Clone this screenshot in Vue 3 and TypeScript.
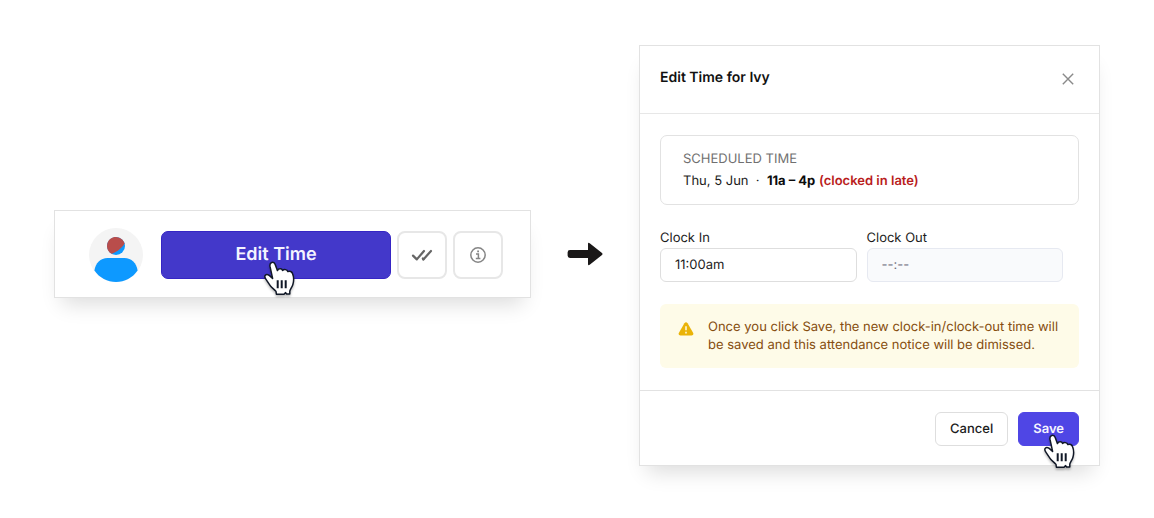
<script setup lang="ts">
import { ref } from 'vue'

const clockIn = ref<string>('11:00am')
const clockOut = ref<string>('')
const handPath =
  'M9.6 17.4 L7 5.4 C6.2 1.2 10.8 -0.2 12.2 3.4 L14.4 9.6 C15.4 7.4 18.8 7.2 19.6 9.4 C21 7.9 24.2 8.4 24.8 10.6 C26.6 9.6 29 10.6 29.6 12.8 C31 16.4 30.8 20.6 29.8 23.8 C29 26.4 27 28.4 26.8 30.2 L26.8 33 L23.6 33 L22.6 31.6 L21 33.2 L13.4 33.2 L13 30.4 C11.4 28.4 8.6 26.8 7.2 24.6 L3 18.4 C0.2 14.6 3 12.4 6.2 14.4 Z'
</script>

<template>
  <main class="page">
    <section class="notice" aria-label="Attendance notice">
      <svg class="avatar" viewBox="0 0 54 54" aria-hidden="true">
        <circle cx="27" cy="27" r="27" fill="#f4f4f4" />
        <circle cx="27" cy="18" r="9" fill="#0d99ff" />
        <path d="M35.6 15.4 A9 9 0 1 0 22.4 25.7 C25.5 25 32 21.5 35.6 15.4 Z" fill="#b94d4b" />
        <path d="M18.5 30 H35.5 C42.5 30 47.5 35 48.6 42.6 C43.6 50 35.6 54 27 54 S10.4 50 5.4 42.6 C6.5 35 11.5 30 18.5 30 Z" fill="#0d99ff" />
      </svg>
      <div class="edit-wrap">
        <button type="button" class="edit">Edit Time</button>
        <svg class="hand" viewBox="0 0 32 35" aria-hidden="true">
          <path :d="handPath" />
          <path class="creases" d="M14.7 19.2V27.2M18.7 19.2V27.2M22.7 19.2V27.2" />
        </svg>
      </div>
      <button type="button" class="tool" aria-label="Approve">
        <svg viewBox="0 0 22 14" width="22" height="14" fill="none" stroke="#666" stroke-width="2.2" stroke-linecap="round" stroke-linejoin="round" aria-hidden="true">
          <path d="M2 7.6 L5.8 11.4 L13 3" />
          <path d="M12.4 11.4 L20 3" />
          <path d="M11.8 10.4 L12.4 11.4" />
        </svg>
      </button>
      <button type="button" class="tool" aria-label="Details">
        <svg viewBox="0 0 18 18" width="18" height="18" fill="none" stroke="#858585" stroke-width="1.5" aria-hidden="true">
          <circle cx="9" cy="9" r="7.2" />
          <path d="M7 8H9.4V12.6M6.8 12.6H11.4" />
          <path d="M8.2 5.3H10" stroke-width="1.8" />
        </svg>
      </button>
    </section>

    <svg class="arrow" viewBox="0 0 36 24" aria-hidden="true">
      <path d="M3 8 H21 V2 Q21 0 23 1.4 L35 11 Q36 12 35 13 L23 22.6 Q21 24 21 22 V16 H3 Q0.6 16 0.6 13.6 V10.4 Q0.6 8 3 8 Z" fill="#1a1818" />
    </svg>

    <section class="dialog" role="dialog" aria-labelledby="dialog-title">
      <header class="head">
        <h1 id="dialog-title">Edit Time for Ivy</h1>
        <button type="button" class="close" aria-label="Close">
          <svg viewBox="0 0 12 12" width="12" height="12" fill="none" stroke="#8a8a8a" stroke-width="1.4" aria-hidden="true">
            <path d="M0.8 0.8 L11.2 11.2 M11.2 0.8 L0.8 11.2" />
          </svg>
        </button>
      </header>

      <form class="body" @submit.prevent>
        <div class="schedule">
          <div class="caption">SCHEDULED TIME</div>
          <div>Thu, 5 Jun &nbsp;·&nbsp; <strong>11a – 4p</strong> <span class="late">(clocked in late)</span></div>
        </div>
        <div class="fields">
          <div class="field">
            <label for="clock-in">Clock In</label>
            <input id="clock-in" v-model="clockIn" type="text" />
          </div>
          <div class="field">
            <label for="clock-out">Clock Out</label>
            <input id="clock-out" v-model="clockOut" type="text" placeholder="--:--" disabled />
          </div>
        </div>
        <div class="warning" role="note">
          <svg viewBox="0 0 16 14" width="16" height="14" aria-hidden="true">
            <path d="M6.4 1.2 Q8 -0.8 9.6 1.2 L15.2 11 Q16 13.2 13.6 13.6 H2.4 Q0 13.2 0.8 11 Z" fill="#eab308" />
            <path d="M8 4.2V8.2M8 9.8V11.4" stroke="#fefce8" stroke-width="1.5" />
          </svg>
          <p>Once you click Save, the new clock-in/clock-out time will be saved and this attendance notice will be dimissed.</p>
        </div>
      </form>

      <footer class="foot">
        <button type="button" class="cancel">Cancel</button>
        <div class="save-wrap">
          <button type="button" class="save">Save</button>
          <svg class="hand" viewBox="0 0 32 35" aria-hidden="true">
            <path :d="handPath" />
            <path class="creases" d="M14.7 19.2V27.2M18.7 19.2V27.2M22.7 19.2V27.2" />
          </svg>
        </div>
      </footer>
    </section>
  </main>
</template>

<style>
body {
  margin: 0;
  background: #fff;
}
</style>

<style scoped>
.page {
  display: grid;
  grid-template-columns: 477fr 36px 461fr;
  column-gap: 36px;
  align-items: center;
  padding: 45px 54px;
  color: #1c1c1c;
  font: 13px/18px Inter, sans-serif;
  text-rendering: geometricPrecision;
}
.page * {
  box-sizing: border-box;
}
button,
input {
  margin: 0;
  font: inherit;
  color: inherit;
  text-rendering: inherit;
}
.notice,
.dialog {
  border: 1px solid #e2e2e2;
  background: #fff;
  box-shadow: 0 14px 20px -8px rgba(0, 0, 0, 0.14);
}
.notice {
  display: flex;
  align-items: center;
  gap: 6px;
  margin-bottom: 3px;
  padding: 17px 27px 15px 34px;
}
.avatar {
  flex: none;
  width: 54px;
  height: 54px;
  margin-right: 12px;
}
.edit-wrap,
.save-wrap {
  position: relative;
}
.edit-wrap {
  flex: 1;
}
.edit {
  display: block;
  width: 100%;
  height: 48px;
  border: 1px solid #3525c4;
  border-radius: 7px;
  background: #4338ca;
  color: #f4f3ff;
  font-size: 18px;
  font-weight: 600;
}
.tool {
  display: flex;
  flex: none;
  align-items: center;
  justify-content: center;
  width: 50px;
  height: 48px;
  padding: 0;
  border: 2px solid #e7e7e7;
  border-radius: 8px;
  background: #fff;
}
.hand {
  position: absolute;
  top: 30px;
  left: calc(50% - 13px);
  width: 32px;
  height: 35px;
  fill: #fff;
  stroke: #111827;
  stroke-width: 1.5;
  stroke-linejoin: round;
  filter: drop-shadow(0 2px 1px rgba(0, 0, 0, 0.25));
  pointer-events: none;
}
.creases {
  stroke-width: 2;
}
.arrow {
  width: 36px;
  height: 24px;
  margin-bottom: 3px;
}
.head {
  display: flex;
  align-items: center;
  justify-content: space-between;
  height: 68px;
  padding: 0 24px 4px 20px;
  border-bottom: 1px solid #e7e7e7;
}
h1 {
  margin: 0;
  color: #111;
  font-size: 14px;
  line-height: 20px;
  font-weight: 600;
}
.close {
  display: flex;
  margin-top: 2px;
  padding: 1px;
  border: 0;
  background: none;
}
.body {
  display: grid;
  gap: 22px;
  padding: 21px 20px 22px;
}
.schedule {
  padding: 12px 22px;
  border: 1px solid #e2e2e2;
  border-radius: 7px;
}
.schedule div {
  line-height: 22px;
}
.schedule .caption {
  color: #707070;
}
strong {
  color: #0c0c0c;
  font-weight: 700;
}
.late {
  color: #b91c1c;
  font-weight: 600;
}
.fields {
  display: grid;
  grid-template-columns: 1fr 1fr;
  gap: 10px;
  padding-right: 16px;
}
.field {
  display: grid;
}
.field label {
  padding: 2px 0 1px;
}
.field input {
  width: 100%;
  height: 34px;
  padding: 0 14px;
  border: 1px solid #dedede;
  border-radius: 6px;
  background: #fff;
}
.field input:disabled {
  border-color: #e6e9f1;
  background: #f9fafc;
}
.field input::placeholder {
  color: #6b6b7b;
  opacity: 1;
}
.warning {
  display: flex;
  align-items: flex-start;
  gap: 14px;
  padding: 14px 18px;
  border-radius: 6px;
  background: #fefbe8;
  color: #854d0e;
}
.warning svg {
  flex: none;
  margin-top: 4px;
}
.warning p {
  margin: 0;
}
.foot {
  display: flex;
  justify-content: flex-end;
  gap: 10px;
  padding: 21px 20px 19px;
  border-top: 1px solid #e2e2e2;
}
.cancel,
.save {
  display: block;
  height: 34px;
  padding: 0 14px;
  border: 1px solid #dedede;
  border-radius: 6px;
  background: #fff;
  font-weight: 500;
}
.save {
  border-color: #4f46e5;
  background: #4f46e5;
  color: #f7f6ff;
  font-weight: 600;
}
.save-wrap .hand {
  top: 22px;
  left: calc(50% - 6px);
}
</style>
